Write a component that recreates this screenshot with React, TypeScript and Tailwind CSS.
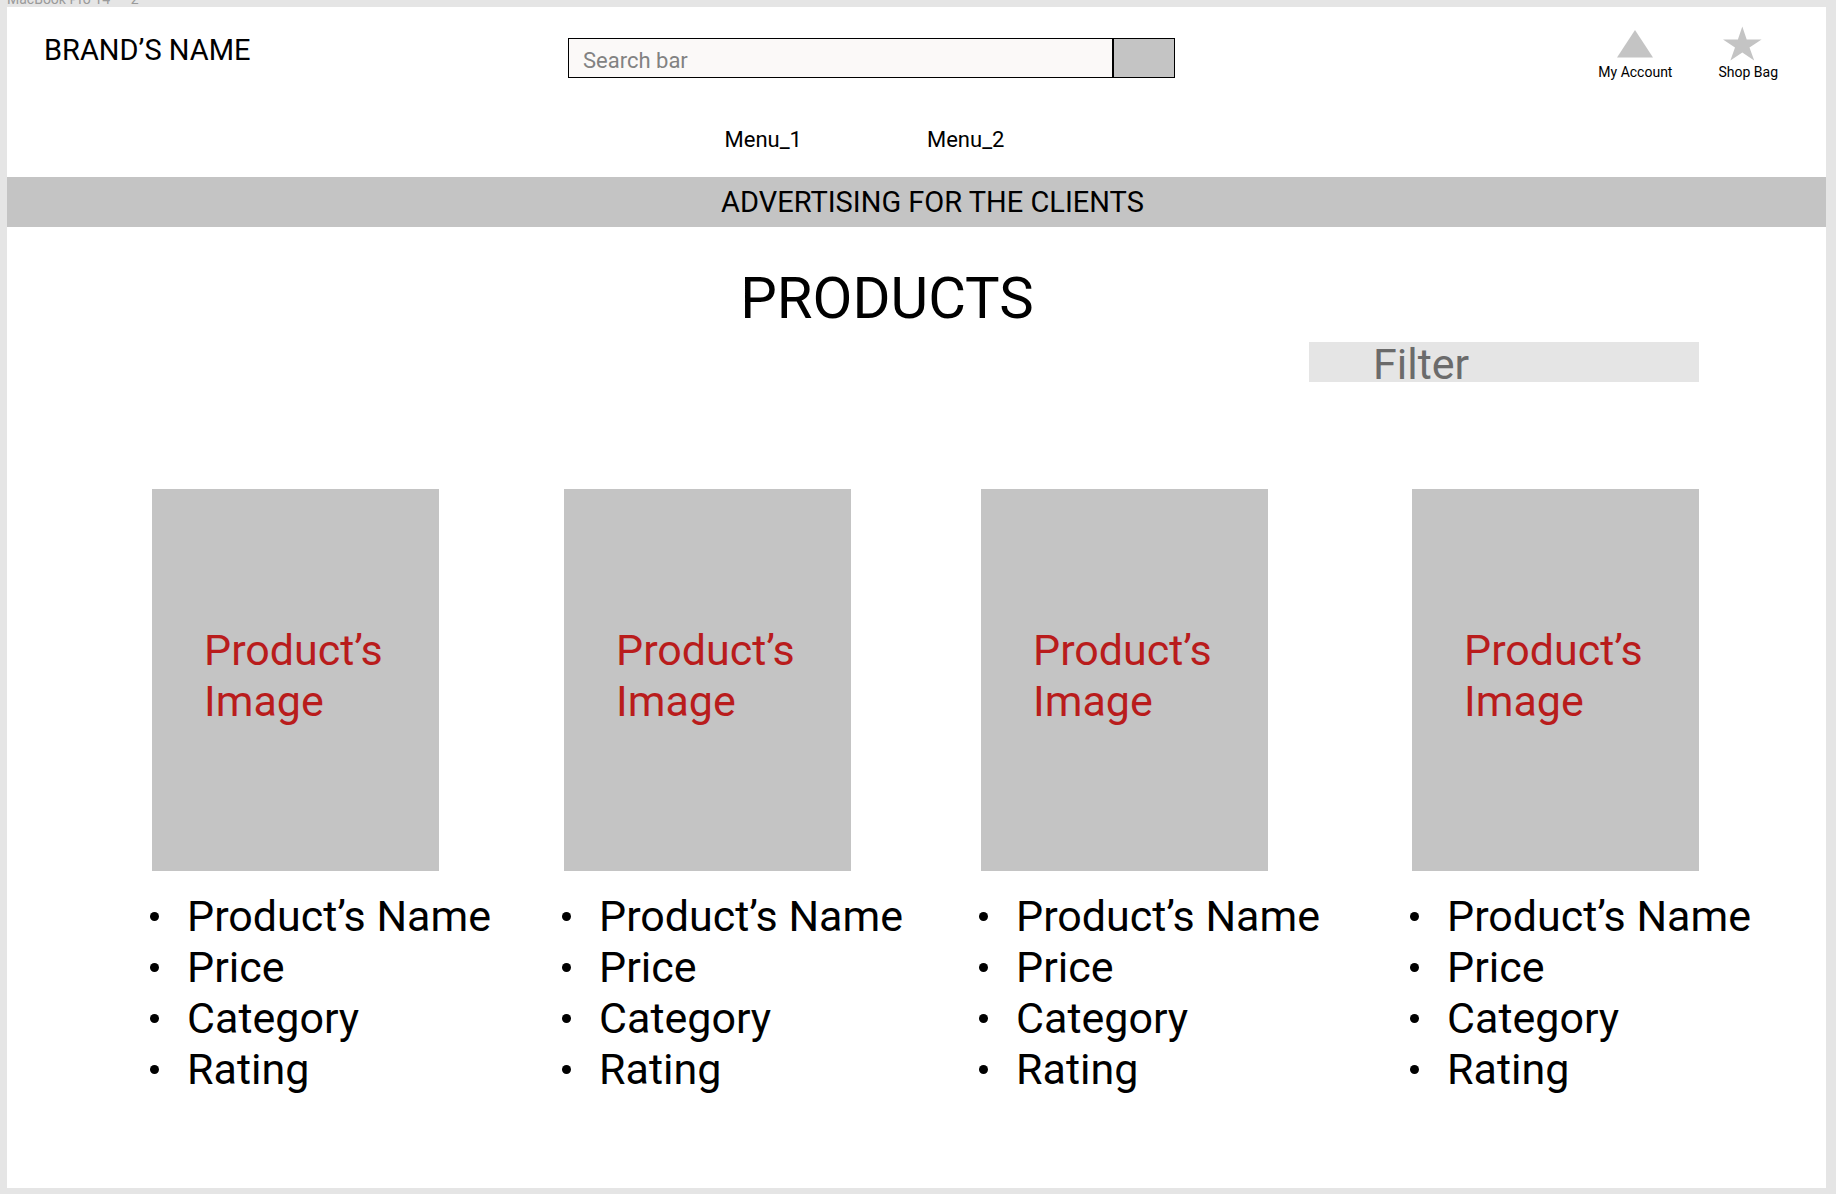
const PRODUCTS = [1, 2, 3, 4];
const DETAILS = ["Product’s Name", "Price", "Category", "Rating"];

function TriangleIcon() {
  return (
    <svg width="50" height="38" viewBox="0 0 50 38" fill="#c4c4c4" aria-hidden="true">
      <path d="M25 4L43 31.5H7Z" />
    </svg>
  );
}

function StarIcon() {
  return (
    <svg width="50" height="38" viewBox="0 0 50 38" fill="#c4c4c4" aria-hidden="true">
      <path d="M19.3 0.5L23.7 13.5H38.6L26.5 21.5L31.2 34.5L19.3 26.5L7.4 34.5L12 21.5L0 13.5H14.9Z" />
    </svg>
  );
}

function Header() {
  return (
    <header className="pl-[37px] pr-12 pt-[19px] pb-6">
      <div className="grid grid-cols-[524fr_607fr_603fr] items-start">
        <a href="#" className="pt-[7px] text-[29px] leading-[34px] whitespace-nowrap">
          BRAND’S NAME
        </a>
        <form className="flex pt-3" onSubmit={(e) => e.preventDefault()}>
          <input
            type="search"
            aria-label="Search"
            placeholder="Search bar"
            className="h-10 min-w-0 flex-1 appearance-none border border-black bg-[#fbf9f8] px-[14px] pt-1 text-[22px] leading-[26px] outline-none placeholder:text-[#828282]"
          />
          <button type="submit" aria-label="Search" className="h-10 w-[62px] border border-black bg-[#c4c4c4]" />
        </form>
        <div className="flex justify-end gap-[46px] text-[14px] leading-4 whitespace-nowrap">
          <a href="#account" className="flex flex-col items-center">
            <TriangleIcon />
            My Account
          </a>
          <a href="#bag" className="flex flex-col items-center">
            <StarIcon />
            Shop Bag
          </a>
        </div>
      </div>
      <div className="mt-[47px] grid grid-cols-[524fr_607fr_603fr]">
        <nav className="col-start-2 flex justify-center gap-[125px] pr-[14px] text-[22px] leading-[26px]">
          <a href="#menu-1">Menu_1</a>
          <a href="#menu-2">Menu_2</a>
        </nav>
      </div>
    </header>
  );
}

function ProductCard() {
  return (
    <article className="w-[289px] text-[43px] leading-[51px] whitespace-nowrap">
      <div className="ml-0.5 h-[382px] bg-[#c4c4c4] pt-[136px] pl-[52px] text-[#b91c1c]">
        Product’s
        <br />
        Image
      </div>
      <ul className="mt-5">
        {DETAILS.map((detail) => (
          <li
            key={detail}
            className="flex items-center gap-7 before:size-[9px] before:shrink-0 before:rounded-full before:bg-black"
          >
            {detail}
          </li>
        ))}
      </ul>
    </article>
  );
}

export default function App() {
  return (
    <div className="flex min-h-screen flex-col bg-[#e5e5e5] pr-[10px] pb-1.5 pl-[7px] font-['Roboto',sans-serif] text-black">
      <div className="flex h-[7px] items-end overflow-hidden text-[14px] leading-4 text-[#9a9a9a]">
        <span>MacBook Pro 14" – 2</span>
      </div>
      <div className="flex-1 bg-white">
        <Header />
        <div className="bg-[#c4c4c4] py-2 pl-8 text-center text-[29px] leading-[34px]">
          ADVERTISING FOR THE CLIENTS
        </div>
        <main className="pr-[127px] pl-[143px]">
          <h1 className="mt-[37px] pr-[75px] text-center text-[58px] leading-[68px]">PRODUCTS</h1>
          <div className="mt-2.5 flex justify-end">
            <button
              type="button"
              className="flex h-10 w-[390px] items-start bg-[#e5e5e5] pl-16 text-[43px] leading-[45px] text-[#6b6b6b]"
            >
              Filter
            </button>
          </div>
          <section aria-label="Products" className="mt-[107px] grid grid-cols-[412fr_417fr_431fr_289fr]">
            {PRODUCTS.map((id) => (
              <ProductCard key={id} />
            ))}
          </section>
        </main>
      </div>
    </div>
  );
}
